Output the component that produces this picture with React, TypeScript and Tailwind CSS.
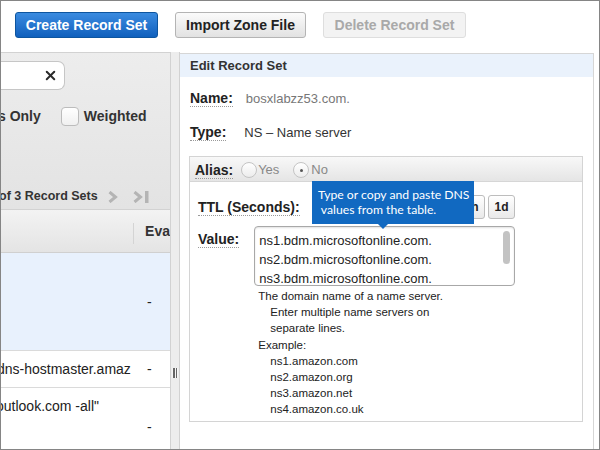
import { X } from 'lucide-react';

const NS_VALUES = [
  'ns1.bdm.microsoftonline.com.',
  'ns2.bdm.microsoftonline.com.',
  'ns3.bdm.microsoftonline.com.',
];

function Chevron({ end = false }: { end?: boolean }) {
  return (
    <svg width={end ? 17 : 10} height="12" viewBox={end ? '0 0 17 12' : '0 0 10 12'}>
      <path d="M1.5 1 L7.5 6 L1.5 11" fill="none" stroke="#b4b4b4" strokeWidth="3" />
      {end && <rect x="12" y="0" width="3.5" height="12" fill="#b4b4b4" />}
    </svg>
  );
}

function Label({ children }: { children: React.ReactNode }) {
  return (
    <span className="inline-block border-b border-dotted border-[#9a9a9a] text-[14px] leading-[16px] font-bold text-[#222]">
      {children}
    </span>
  );
}

function Radio({ checked }: { checked?: boolean }) {
  return (
    <span className="flex h-[16px] w-[16px] items-center justify-center rounded-full border border-[#c4c4c4] bg-gradient-to-b from-white to-[#ececec]">
      {checked && <span className="h-[3px] w-[3px] rounded-full bg-[#555]" />}
    </span>
  );
}

export default function App() {
  return (
    <div className="flex h-[450px] w-[600px] flex-col overflow-hidden border border-[#858585] bg-white font-['Liberation_Sans',Arial,sans-serif] text-[#222]">
      {/* Toolbar */}
      <div className="flex h-[51px] shrink-0 items-start gap-[17px] pl-[14px] pt-[11px]">
        <button className="h-[26px] w-[143px] rounded-[3px] border border-[#0d559f] bg-gradient-to-b from-[#3a8be0] to-[#0f60bd] text-[14px] font-bold text-white">
          Create Record Set
        </button>
        <button className="h-[26px] w-[131px] rounded-[3px] border border-[#b4b4b4] bg-gradient-to-b from-[#fbfbfb] to-[#e2e2e2] text-[14px] font-bold text-[#222]">
          Import Zone File
        </button>
        <button className="h-[26px] w-[143px] rounded-[3px] border border-[#dedede] bg-[#f3f3f3] text-[14px] font-bold text-[#a9a9a9]">
          Delete Record Set
        </button>
      </div>

      <div className="flex min-h-0 flex-1">
        {/* Record sets list */}
        <div className="flex w-[169px] shrink-0 flex-col overflow-hidden">
          <div className="flex h-[158px] shrink-0 flex-col border-y border-[#d2d2d2] bg-gradient-to-b from-[#ededed] to-[#e3e3e3]">
            <div className="mt-[8px] flex h-[29px] w-[64px] items-center justify-end rounded-r-[7px] border border-l-0 border-[#c6c6c6] bg-white pr-[6px]">
              <X className="h-[15px] w-[15px] text-[#2a2a2a]" strokeWidth={3.2} />
            </div>
            <div className="mt-[17px] flex h-[19px] items-center">
              <span className="-ml-[3px] text-[14px] font-bold text-[#333]">s Only</span>
              <span className="ml-[20px] h-[19px] w-[18px] rounded-[4px] border border-[#bcbcbc] bg-gradient-to-b from-white to-[#f0f0f0]" />
              <span className="ml-[5px] text-[14px] font-bold text-[#333]">Weighted</span>
            </div>
            <div className="mt-auto mb-[3px] flex items-center">
              <span className="-ml-[2px] text-[12.5px] font-bold text-[#333]">of 3 Record Sets</span>
              <span className="ml-[10px] flex"><Chevron /></span>
              <span className="ml-[15px] flex"><Chevron end /></span>
            </div>
          </div>

          <div className="flex h-[43px] shrink-0 items-center border-b border-[#d0d0d0] bg-gradient-to-b from-[#f3f3f3] to-[#e4e4e4]">
            <div className="w-[135px] self-stretch pt-[13px]">
              <div className="ml-auto h-[21px] w-px bg-[#d4d4d4]" />
            </div>
            <span className="pl-[11px] text-[14px] font-bold text-[#333]">Eva</span>
          </div>

          <div className="flex h-[98px] shrink-0 border-b border-[#dadada] bg-[#e8f1fd] text-[14px]">
            <div className="w-[135px]" />
            <div className="pl-[11px] pt-[39px]">-</div>
          </div>

          <div className="flex h-[37px] shrink-0 items-center border-b border-[#dadada] text-[14px]">
            <div className="w-[135px] overflow-hidden whitespace-nowrap pr-[10px]">
              <span className="-ml-[4px] block">dns-hostmaster.amaz</span>
            </div>
            <div className="pl-[11px]">-</div>
          </div>

          <div className="flex flex-1 text-[14px]">
            <div className="w-[135px] pt-[8px] whitespace-nowrap">
              <span className="-ml-[5px] block">outlook.com -all"</span>
            </div>
            <div className="pl-[11px] pt-[29px]">-</div>
          </div>
        </div>

        {/* Splitter */}
        <div className="flex w-[10px] shrink-0 flex-col items-center border-x border-[#d2d2d2] bg-[#ededed] pt-[316px]">
          <div className="flex h-[10px] w-[6px] justify-center gap-[1px] rounded-[1px] bg-[#f6f6f6]">
            <span className="h-full w-[1.5px] bg-[#666]" />
            <span className="h-full w-[1.5px] bg-[#666]" />
          </div>
        </div>

        {/* Edit panel */}
        <div className="flex min-w-0 flex-1 flex-col pr-[5px] pt-[1px]">
          <div className="flex flex-1 flex-col border-r border-t border-[#d6d6d6]">
            <div className="flex h-[23px] shrink-0 items-center bg-[#eaf2fc] pl-[10px] text-[13px] font-bold text-[#333]">
              Edit Record Set
            </div>

            <div className="mt-[12px] flex items-center pl-[10px]">
              <Label>Name:</Label>
              <span className="ml-[13px] text-[13px] text-[#777]">bosxlabzz53.com.</span>
            </div>
            <div className="mt-[14px] flex items-center pl-[10px]">
              <Label>Type:</Label>
              <span className="ml-[18px] text-[13px] text-[#333]">NS – Name server</span>
            </div>

            <div className="relative ml-[9px] mr-[10px] mt-[14px] h-[266px] border border-[#d4d4d4]">
              <div className="flex h-[25px] items-center gap-[2px] border-b border-[#d6d6d6] bg-gradient-to-b from-[#f8f8f8] to-[#e5e5e5] pl-[5px] pt-[2px]">
                <Label>Alias:</Label>
                <span className="ml-[6px] flex items-center gap-[1px] text-[13px] text-[#888]">
                  <Radio /> Yes
                </span>
                <span className="ml-[12px] flex items-center gap-[2px] text-[13px] text-[#888]">
                  <Radio checked /> No
                </span>
              </div>

              <div className="flex items-center pl-[8px] pt-[13px]">
                <Label>TTL (Seconds):</Label>
                <div className="ml-[14px] h-[24px] w-[80px] rounded-[3px] border border-[#b8b8b8]" />
                <div className="ml-auto mr-[67px] flex gap-[3px]">
                  {['', '', '1h', '1d'].map((t, i) => (
                    <span
                      key={i}
                      className="flex h-[24px] w-[27px] items-center justify-center rounded-[3px] border border-[#bdbdbd] bg-gradient-to-b from-white to-[#e9e9e9] text-[12px] font-bold"
                    >
                      {t}
                    </span>
                  ))}
                </div>
              </div>

              <div className="mt-[7px] flex pl-[8px]">
                <div className="pt-[1px]">
                  <Label>Value:</Label>
                </div>
                <div className="ml-[15px]">
                  <div className="flex h-[60px] w-[261px] rounded-[4px] border border-[#a8a8a8] shadow-[inset_0_1px_2px_rgba(0,0,0,0.12)]">
                    <div className="flex-1 overflow-hidden pl-[4px] pt-[4px] text-[13px] leading-[19px] text-[#222]">
                      {NS_VALUES.map((v) => (
                        <div key={v}>{v}</div>
                      ))}
                    </div>
                    <div className="w-[11px] pt-[4px]">
                      <div className="h-[33px] w-[7px] rounded-full bg-[#c3c3c3]" />
                    </div>
                  </div>
                  <div className="pl-[4px] pt-[2px] text-[11.5px] leading-[16.2px] text-[#222]">
                    <div>The domain name of a name server.</div>
                    <div className="pl-[12px]">Enter multiple name servers on</div>
                    <div className="pl-[12px]">separate lines.</div>
                    <div>Example:</div>
                    <div className="pl-[12px]">ns1.amazon.com</div>
                    <div className="pl-[12px]">ns2.amazon.org</div>
                    <div className="pl-[12px]">ns3.amazon.net</div>
                    <div className="pl-[12px]">ns4.amazon.co.uk</div>
                  </div>
                </div>
              </div>

              {/* Tooltip */}
              <div className="absolute left-[122px] top-[24px] h-[43px] w-[162px] bg-[#1169c1] pl-[6px] pt-[6px] font-['Lato',sans-serif] text-[12.2px] leading-[15px] whitespace-nowrap text-white">
                <div>Type or copy and paste DNS</div>
                <div>&nbsp;values from the table.</div>
                <div className="absolute left-[66px] top-[43px] h-0 w-0 border-x-[5px] border-t-[5px] border-x-transparent border-t-[#1169c1]" />
              </div>
            </div>
          </div>
        </div>
      </div>
    </div>
  );
}
